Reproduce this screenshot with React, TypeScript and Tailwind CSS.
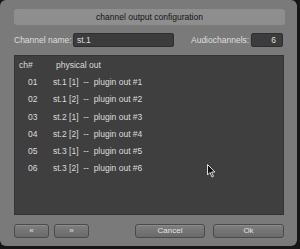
const rows = [
  { ch: "01", src: "st.1 [1]", out: "plugin out #1" },
  { ch: "02", src: "st.1 [2]", out: "plugin out #2" },
  { ch: "03", src: "st.2 [1]", out: "plugin out #3" },
  { ch: "04", src: "st.2 [2]", out: "plugin out #4" },
  { ch: "05", src: "st.3 [1]", out: "plugin out #5" },
  { ch: "06", src: "st.3 [2]", out: "plugin out #6" },
];

function Btn({ label, className }: { label: string; className: string }) {
  return (
    <button
      className={`h-[14px] rounded-[3px] border border-[#4a4a4a] bg-gradient-to-b from-[#7e7e7e] to-[#6a6a6a] text-[8px] leading-none text-[#e2e2e2] shadow-[inset_0_1px_0_#8c8c8c] ${className}`}
    >
      {label}
    </button>
  );
}

export default function App() {
  return (
    <div
      className="relative w-[300px] h-[249px] bg-[#161616] overflow-hidden"
      style={{ fontFamily: '"Liberation Sans", Arial, sans-serif' }}
    >
      <div className="w-[297px] h-[246px] rounded-[6px] bg-[#7a7a7a] pl-[14px] pr-[12px] pt-[9px] flex flex-col">
        <div className="h-[16px] rounded-[3px] bg-[#8e8e8e] flex items-center justify-center text-[8.5px] text-[#151515]">
          channel output configuration
        </div>

        <div className="mt-[8px] h-[14px] flex items-center text-[8.5px] text-[#dedede]">
          <span className="w-[59px]">Channel name:</span>
          <div className="w-[101px] h-[14px] bg-[#3c3c3c] border border-[#2e2e2e] rounded-[2px] flex items-center pl-[3px]">
            st.1
          </div>
          <span className="ml-[17px] w-[60px]">Audiochannels:</span>
          <div className="w-[32px] h-[14px] bg-[#3c3c3c] border border-[#2e2e2e] rounded-[2px] flex items-center justify-end pr-[6px]">
            6
          </div>
        </div>

        <div className="mt-[8px] w-[270px] h-[160px] bg-[#3f3f3f] border border-[#333] text-[8.5px] text-[#dcdcdc]">
          <div className="flex h-[18px] items-center">
            <span className="w-[41px] pl-[4px]">ch#</span>
            <span>physical out</span>
          </div>
          {rows.map((r) => (
            <div key={r.ch} className="flex h-[17.2px] items-center">
              <span className="w-[38px] pl-[13px]">{r.ch}</span>
              <span className="whitespace-pre">
                {r.src}  --  {r.out}
              </span>
            </div>
          ))}
        </div>

        <div className="mt-[9px] flex">
          <Btn label="«" className="w-[35px]" />
          <Btn label="»" className="ml-[5px] w-[35px]" />
          <Btn label="Cancel" className="ml-[46px] w-[70px]" />
          <Btn label="Ok" className="ml-[8px] w-[71px]" />
        </div>
      </div>

      <svg
        className="absolute left-[207px] top-[164px]"
        width="9"
        height="14"
        viewBox="0 0 9 14"
      >
        <path d="M0.5 0.5 L0.5 11 L3 8.5 L5 13 L6.5 12.3 L4.6 8 L8 8 Z" fill="#111" stroke="#ddd" strokeWidth="1" />
      </svg>
    </div>
  );
}
